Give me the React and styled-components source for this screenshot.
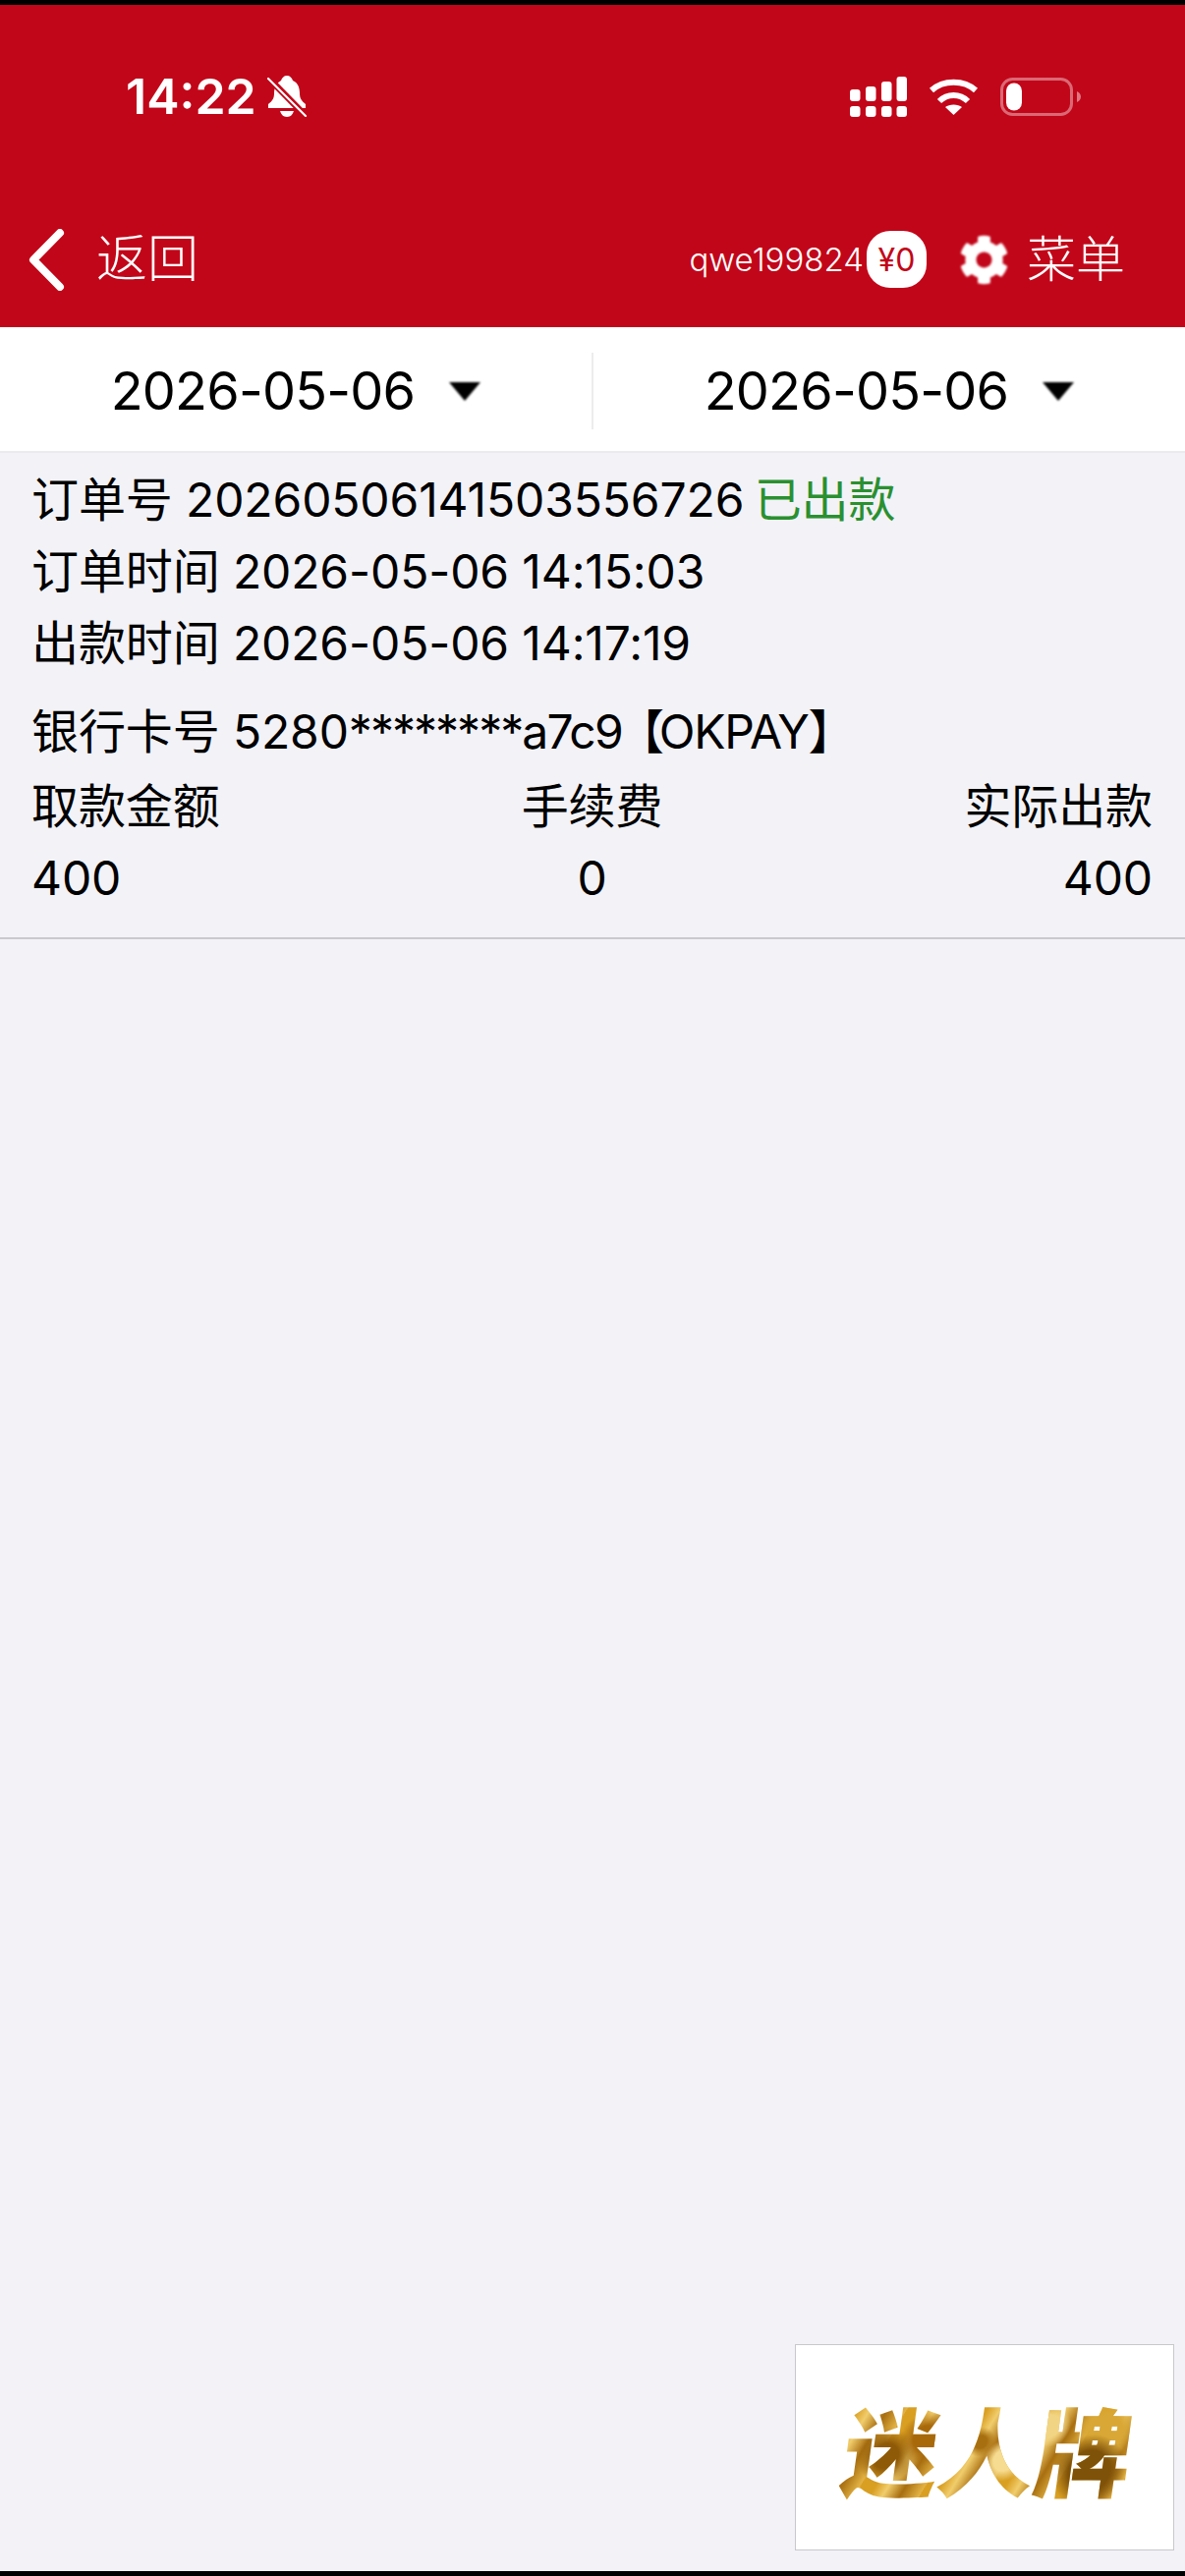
import React from 'react';
import styled, { createGlobalStyle } from 'styled-components';
import { FaCog } from 'react-icons/fa';

const GlobalStyle = createGlobalStyle`
  html, body {
    margin: 0;
    padding: 0;
    background: #f2f2f7;
    font-family: Inter, "Noto Sans CJK SC", sans-serif;
  }
`;

const Page = styled.div`
  position: relative;
  width: 1206px;
  height: 2622px;
  overflow: hidden;
  display: flex;
  flex-direction: column;
  background: #f2f2f7;
  border-top: 5px solid #000;
  border-bottom: 5px solid #000;
  box-sizing: border-box;
`;

const Header = styled.header`
  height: 328px;
  background: #c20619;
  color: #fff;
  display: flex;
  flex-direction: column;
`;

const StatusBar = styled.div`
  height: 190px;
  padding: 72px 106px 0 128px;
  box-sizing: border-box;
  display: flex;
  align-items: flex-start;
  justify-content: space-between;
`;

const StatusGroup = styled.div`
  display: flex;
  align-items: center;
  gap: ${(p) => p.$gap || 13}px;
  height: 42px;
`;

const Clock = styled.span`
  font-size: 50px;
  font-weight: 600;
  line-height: 42px;
`;

const NavBar = styled.div`
  flex: 1;
  display: flex;
  align-items: center;
  justify-content: space-between;
  padding: 0 61px 0 28px;
`;

const NavSide = styled.div`
  display: flex;
  align-items: center;
`;

const NavLabel = styled.span`
  font-size: ${(p) => p.$size || 52}px;
  font-weight: 300;
  line-height: 64px;
  margin-left: ${(p) => p.$left || 0}px;
  white-space: nowrap;
`;

const UserName = styled.span`
  font-size: 33px;
  font-weight: 300;
  line-height: 40px;
  margin-right: 3px;
`;

const Balance = styled.span`
  width: 61px;
  height: 58px;
  border-radius: 24px;
  background: #fff;
  color: #c20619;
  font-size: 32px;
  font-weight: 400;
  display: flex;
  align-items: center;
  justify-content: center;
  margin-right: 33px;
`;

const Gear = styled(FaCog)`
  width: 51px;
  height: 51px;
  color: #fff;
  filter: blur(0.8px);
`;

const DateBar = styled.div`
  height: 128px;
  box-sizing: border-box;
  padding-top: 3px;
  background: #fff;
  border-bottom: 2px solid #ebebef;
  display: flex;
  align-items: center;
`;

const DateCell = styled.div`
  flex: 1;
  height: 78px;
  display: flex;
  align-items: center;
  justify-content: center;
  gap: 35px;
  border-left: ${(p) => (p.$divided ? '2px solid #ececec' : 'none')};
  font-size: 54px;
  letter-spacing: -0.8px;
  color: #000;
`;

const Caret = styled.span`
  width: 0;
  height: 0;
  border-left: 16.5px solid transparent;
  border-right: 16.5px solid transparent;
  border-top: 19px solid #000;
  filter: blur(0.9px);
  margin-top: 1px;
`;

const OrderCard = styled.section`
  padding: 11px 33px 24px 32px;
  border-bottom: 2px solid #c9c9ce;
  color: #000;
  font-size: 48px;
  letter-spacing: -0.12px;
`;

const Line = styled.div`
  line-height: 73px;
  white-space: nowrap;
  margin-top: ${(p) => p.$top || 0}px;
`;

const Status = styled.span`
  color: #2a9030;
  margin-left: -3px;
`;

const CardMask = styled.span`
  letter-spacing: -2px;
`;

const CardTail = styled.span`
  letter-spacing: -1.8px;
`;

const Bracket = styled.span`
  margin: 0 ${(p) => p.$right || 0}px 0 ${(p) => p.$left || 0}px;
`;

const Channel = styled.span`
  letter-spacing: -1.3px;
`;

const AmountGrid = styled.div`
  display: grid;
  grid-template-columns: 1fr auto 1fr;
  margin-top: 3px;
  line-height: 73px;

  & > :nth-child(3n + 2) {
    text-align: center;
  }
  & > :nth-child(3n) {
    text-align: right;
  }
`;

const LogoBox = styled.div`
  position: absolute;
  right: 11px;
  bottom: 21px;
  width: 386px;
  height: 210px;
  box-sizing: border-box;
  background: #fff;
  border: 1.5px solid #c8c8cc;
  display: flex;
  align-items: center;
  justify-content: center;
`;

const LogoText = styled.span`
  display: block;
  margin-left: 8px;
  font-family: "Noto Sans CJK SC", sans-serif;
  font-size: 98px;
  line-height: 110px;
  font-weight: 900;
  transform: skewX(-8deg);
  color: transparent;
  background:
    radial-gradient(circle at 15% 58%, #8f5a08 0 5%, transparent 11%),
    radial-gradient(circle at 28% 42%, #a8690b 0 6%, transparent 12%),
    radial-gradient(circle at 47% 45%, #a86f10 0 4%, transparent 9%),
    radial-gradient(circle at 56% 62%, #f6dc90 0 6%, transparent 12%),
    radial-gradient(circle at 70% 30%, #f2d584 0 5%, transparent 10%),
    radial-gradient(circle at 86% 72%, #7f5209 0 8%, transparent 14%),
    radial-gradient(circle at 90% 35%, #d8a735 0 6%, transparent 12%),
    repeating-linear-gradient(115deg, #d99f22 0 14px, #f1cd6c 26px, #a86e10 42px, #e5b546 60px);
  -webkit-background-clip: text;
  background-clip: text;
`;

const SignalIcon = () => (
  <svg width="58" height="41" viewBox="0 0 58 41" fill="#fff">
    <rect x="0" y="13" width="10.5" height="12" rx="3" />
    <rect x="16" y="10" width="10.5" height="15" rx="3" />
    <rect x="32" y="5" width="10.5" height="20" rx="3" />
    <rect x="47.5" y="0" width="10.5" height="25" rx="3" />
    <rect x="0" y="30" width="10.5" height="11" rx="3" />
    <rect x="16" y="30" width="10.5" height="11" rx="3" />
    <rect x="32" y="30" width="10.5" height="11" rx="3" />
    <rect x="47.5" y="30" width="10.5" height="11" rx="3" />
  </svg>
);

const WifiIcon = () => (
  <svg width="51" height="37" viewBox="0 0 51 37" fill="none" stroke="#fff" strokeWidth="6">
    <path d="M3 12 C15 1 36 1 48 12" />
    <path d="M11 23 C19 15 32 15 40 23" />
    <path d="M25.5 37 L17 29 C21 25.5 30 25.5 34 29 Z" fill="#fff" stroke="none" />
  </svg>
);

const BatteryIcon = () => (
  <svg width="82" height="39" viewBox="0 0 82 39" fill="none">
    <rect x="1.5" y="1.5" width="71" height="36" rx="11" stroke="#fff" strokeOpacity="0.4" strokeWidth="3" />
    <rect x="6" y="5.5" width="16" height="28" rx="8" fill="#fff" />
    <path d="M78 14 C80.5 15 82 17 82 19.5 C82 22 80.5 24 78 25 Z" fill="#fff" fillOpacity="0.45" />
  </svg>
);

const BellOffIcon = () => (
  <svg width="40" height="42" viewBox="0 0 40 42">
    <path
      d="M20 0 C23 0 25 2 26 5 C31 7 33 12 33 18 C33 23 35 26 39 29 L39 33 L1 33 L1 29 C5 26 7 23 7 18 C7 12 10 7 14 5 C15 2 17 0 20 0 Z"
      fill="#fff"
    />
    <path d="M13 36 L27 36 C26 39 24 42 20 42 C16 42 14 39 13 36 Z" fill="#fff" />
    <path d="M0 1 L40 42" stroke="#c20619" strokeWidth="6.5" />
    <path d="M1 3 L39 41" stroke="#fff" strokeWidth="2.2" strokeLinecap="round" />
  </svg>
);

const BackIcon = () => (
  <svg width="38" height="63" viewBox="0 0 38 63" fill="none">
    <path d="M33 4 L6 31.5 L33 59" stroke="#fff" strokeWidth="8" strokeLinecap="round" strokeLinejoin="round" />
  </svg>
);

function App() {
  return (
    <Page>
      <GlobalStyle />
      <Header>
        <StatusBar>
          <StatusGroup $gap={11}>
            <Clock>14:22</Clock>
            <BellOffIcon />
          </StatusGroup>
          <StatusGroup $gap={22}>
            <SignalIcon />
            <WifiIcon />
            <BatteryIcon />
          </StatusGroup>
        </StatusBar>
        <NavBar>
          <NavSide>
            <BackIcon />
            <NavLabel $left={32}>返回</NavLabel>
          </NavSide>
          <NavSide>
            <UserName>qwe199824</UserName>
            <Balance>¥0</Balance>
            <Gear />
            <NavLabel $left={18} $size={50}>菜单</NavLabel>
          </NavSide>
        </NavBar>
      </Header>

      <DateBar>
        <DateCell>
          2026-05-06
          <Caret />
        </DateCell>
        <DateCell $divided>
          2026-05-06
          <Caret />
        </DateCell>
      </DateBar>

      <OrderCard>
        <Line>
          订单号 20260506141503556726 <Status>已出款</Status>
        </Line>
        <Line>订单时间 2026-05-06 14:15:03</Line>
        <Line>出款时间 2026-05-06 14:17:19</Line>
        <Line $top={17}>
          银行卡号 5280<CardMask>********</CardMask>
          <CardTail>a7c9</CardTail>
          <Bracket $left={-5} $right={-5}>【</Bracket>
          <Channel>OKPAY</Channel>
          <Bracket>】</Bracket>
        </Line>
        <AmountGrid>
          <span>取款金额</span>
          <span>手续费</span>
          <span>实际出款</span>
          <span>400</span>
          <span>0</span>
          <span>400</span>
        </AmountGrid>
      </OrderCard>

      <LogoBox>
        <LogoText>迷人牌</LogoText>
      </LogoBox>
    </Page>
  );
}

export default App;
